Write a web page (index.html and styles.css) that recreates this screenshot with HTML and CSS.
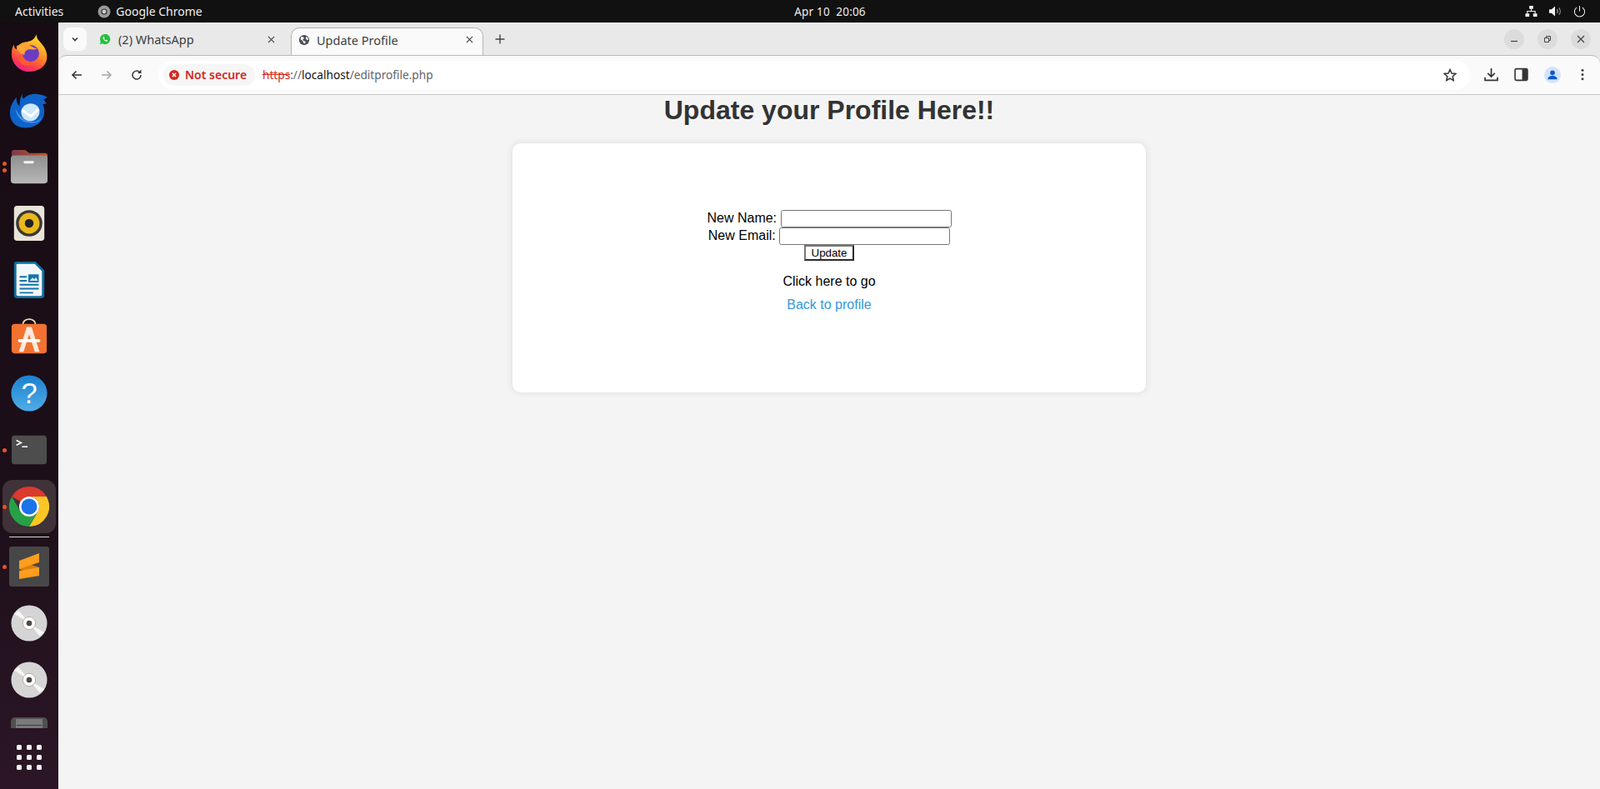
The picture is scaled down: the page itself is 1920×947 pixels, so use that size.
FILE: index.html
```html
<!DOCTYPE html>
<html lang="en">
<head>
<meta charset="utf-8">
<title>Update Profile</title>
<link rel="stylesheet" href="styles.css">
</head>
<body>
<header class="topbar">
  <div class="top-left">
    <span class="activities">Activities</span>
    <span class="app-name">
      <svg class="app-icon" viewBox="0 0 16 16"><circle cx="8" cy="8" r="7.5" fill="#9a9a9a"/><circle cx="8" cy="8" r="3.6" fill="#333"/><circle cx="8" cy="8" r="2.4" fill="#ccc"/></svg>
      Google Chrome
    </span>
  </div>
  <div class="clock">Apr 10&nbsp; 20:06</div>
  <div class="top-right">
    <svg class="tray" viewBox="0 0 16 16"><path d="M5.5 1h5v4h-5zM0.5 11h5v4h-5zM10.500 11h5v4h-5z" fill="#f2f2f2"/><path d="M8 5v3M3 11V8h10v3" fill="none" stroke="#f2f2f2" stroke-width="1.2"/></svg>
    <svg class="tray" viewBox="0 0 16 16"><path d="M0 5.500h3L7.500 1.500v13L3 10.500H0z" fill="#f2f2f2"/><path d="M10 5.500a4 4 0 0 1 0 5M12.500 3.500a7 7 0 0 1 0 9" fill="none" stroke="#9c9c9c" stroke-width="1.200"/></svg>
    <svg class="tray" viewBox="0 0 16 16"><path d="M8 1v7" stroke="#f2f2f2" stroke-width="1.100" fill="none"/><path d="M4.500 3a6.500 6.500 0 1 0 7 0" stroke="#f2f2f2" stroke-width="1.100" fill="none"/></svg>
  </div>
</header>

<div class="desktop">
  <nav class="dock">
    <div class="dock-item">
      <svg class="dock-icon" viewBox="0 0 48 48"><defs><linearGradient id="ff" x1="0.75" y1="0" x2="0.3" y2="1"><stop offset="0" stop-color="#ffe02e"/><stop offset="0.3" stop-color="#ffb02b"/><stop offset="0.55" stop-color="#ff7a2b"/><stop offset="0.8" stop-color="#fb3c4f"/><stop offset="1" stop-color="#ea1f8e"/></linearGradient></defs><path d="M33 0c0 7 5 9 9 15 4 6 5 11 4 17-2 9-11 15-22 15C12 47 2 37 2 25c0-5 1-9 3-12 0 3 1 5 3 6 2-5 5-8 11-9 7-1 12-3 14-10z" fill="url(#ff)"/><circle cx="26" cy="24" r="10.500" fill="#6a3cc4"/><path d="M8 15c6-3 12-3 17-1 4 2 6 4 9 4-3 2-8 1-11 1-3 1-5 3-5 7-4-2-9-5-10-11z" fill="#ffa436"/><path d="M16 27c2 7 9 11 16 8-6 7-18 5-21-3 1-2 3-4 5-5z" fill="#ff5a2e"/></svg>
    </div>
    <div class="dock-item">
      <svg class="dock-icon" viewBox="0 0 48 48"><path d="M16 3c-1 4-1 5 1 7 5-6 16-9 30-2l-5 3 4 5-5 1c4 8 2 17-4 23-8 8-26 9-33 0C-3 31-1 18 8 8c0 5 1 9 4 11 0-6 1-12 4-16z" fill="#0f62c8"/><path d="M14 28c-1-6 5-12 12-12 6 0 11 4 11 10 0 7-6 12-12 12-6 0-10-4-11-10z" fill="#cfe6fb"/><path d="M15 24l11 8 10-9" fill="none" stroke="#fff" stroke-width="3"/><path d="M7 22c1 13 11 20 24 18 5-1 8-4 9-7-3 4-9 7-16 5-8-2-14-8-17-16z" fill="#3f93e8"/></svg>
    </div>
    <div class="dock-item has-pips">
      <span class="pips"><i class="pip"></i><i class="pip"></i></span>
      <svg class="dock-icon" viewBox="0 0 48 48"><defs><linearGradient id="fold" x1="0" y1="0" x2="1" y2="0"><stop offset="0" stop-color="#7c3a4a"/><stop offset="1" stop-color="#c4552f"/></linearGradient><linearGradient id="folb" x1="0" y1="0" x2="0" y2="1"><stop offset="0" stop-color="#8f8f8f"/><stop offset="1" stop-color="#b8b8b8"/></linearGradient></defs><path d="M2 6a3 3 0 0 1 3-3h14l5 4h20a3 3 0 0 1 3 3v10H2z" fill="url(#fold)"/><rect x="1" y="10" width="46" height="35" rx="4" fill="url(#folb)"/><rect x="17" y="17" width="13" height="3" rx="1.500" fill="#f2f2f2"/></svg>
    </div>
    <div class="dock-item">
      <svg class="dock-icon" viewBox="0 0 48 48"><rect x="5" y="2" width="38" height="44" rx="4" fill="#e8e4d9"/><circle cx="24" cy="24" r="16.500" fill="#3a3835"/><circle cx="24" cy="24" r="13" fill="#e9b81c"/><circle cx="24" cy="24" r="5.500" fill="#222"/></svg>
    </div>
    <div class="dock-item">
      <svg class="dock-icon" viewBox="0 0 48 48"><path d="M8 1h24l11 11v31a4 4 0 0 1-4 4H9a4 4 0 0 1-4-4V4a3 3 0 0 1 3-3z" fill="#0f6e9f"/><path d="M9 4h22l9 9v29a2 2 0 0 1-2 2H10a2 2 0 0 1-2-2V5a1 1 0 0 1 1-1z" fill="#f4f7f9"/><path d="M12 19h9v2h-9zM12 24h9v2h-9zM12 29h24v2H12zM12 34h24v2H12zM12 39h17v2H12z" fill="#1274a8"/><rect x="23" y="17" width="13" height="10" fill="#1274a8"/><path d="M24.500 25l3.500-4 2.500 2 2-2.500 2.500 4.500z" fill="#cfe6f3"/></svg>
    </div>
    <div class="dock-item">
      <svg class="dock-icon" viewBox="0 0 48 48"><path d="M16 9c0-9 16-9 16 0" fill="none" stroke="#f1d9b5" stroke-width="2"/><rect x="2" y="8" width="44" height="37" rx="4" fill="#f27232"/><path d="M21 12h6l10 31h-6l-7-22-7 22h-6z" fill="#fde8dc"/><rect x="10" y="27" width="28" height="4" rx="2" fill="#fff"/></svg>
    </div>
    <div class="dock-item">
      <svg class="dock-icon" viewBox="0 0 48 48"><defs><linearGradient id="hp" x1="0" y1="0" x2="0" y2="1"><stop offset="0" stop-color="#1d80cf"/><stop offset="1" stop-color="#4fade8"/></linearGradient></defs><circle cx="24" cy="24" r="22.500" fill="url(#hp)"/><text class="help-mark" x="24" y="36" text-anchor="middle">?</text></svg>
    </div>
    <div class="dock-item has-pips">
      <span class="pips"><i class="pip"></i></span>
      <svg class="dock-icon" viewBox="0 0 48 48"><rect x="2" y="6" width="44" height="36" rx="4" fill="#4d4d4d"/><path d="M8 12l6 3-6 3" fill="none" stroke="#fff" stroke-width="1.600"/><path d="M15 20h7" stroke="#fff" stroke-width="1.600"/></svg>
    </div>
    <div class="dock-item has-pips">
      <span class="pips"><i class="pip"></i></span>
      <div class="dock-active">
        <svg class="chrome-icon" viewBox="0 0 48 48"><path d="M24 0A24 24 0 0 1 44.800 12H24A12 12 0 0 0 13.600 18L3.200 12A24 24 0 0 1 24 0Z" fill="#db3a2d"/><path d="M44.800 12A24 24 0 0 1 24 48L34.400 30A12 12 0 0 0 24 12Z" fill="#fcc624"/><path d="M3.200 12A24 24 0 0 0 24 48L34.400 30A12 12 0 0 1 13.600 30Z" fill="#26a146"/><circle cx="24" cy="24" r="12" fill="#fff"/><circle cx="24" cy="24" r="9.500" fill="#1a73e8"/></svg>
      </div>
    </div>
    <hr class="dock-sep">
    <div class="dock-item has-pips">
      <span class="pips"><i class="pip"></i></span>
      <svg class="sublime-icon" viewBox="0 0 48 48"><rect width="48" height="48" rx="3" fill="#474747"/><path d="M12 17l24 8v10L12 27z" fill="#d97e10"/><path d="M36 8v11l-24 8V17z" fill="#ff9d1c"/><path d="M36 25v10l-24 4V29z" fill="#ff9d1c"/></svg>
    </div>
    <div class="dock-item">
      <svg class="dock-icon" viewBox="0 0 48 48"><circle cx="24" cy="24" r="22.500" fill="#d5d5d5"/><path d="M5 12L24 24 11 8zM43 36L24 24 37 40z" fill="#f6f6f6"/><circle cx="24" cy="24" r="8" fill="#fff" stroke="#b5ab98"/><circle cx="24" cy="24" r="3.500" fill="#4a4a4a"/></svg>
    </div>
    <div class="dock-item">
      <svg class="dock-icon" viewBox="0 0 48 48"><circle cx="24" cy="24" r="22.500" fill="#d5d5d5"/><path d="M5 12L24 24 11 8zM43 36L24 24 37 40z" fill="#f6f6f6"/><circle cx="24" cy="24" r="8" fill="#fff" stroke="#b5ab98"/><circle cx="24" cy="24" r="3.500" fill="#4a4a4a"/></svg>
    </div>
    <div class="dock-drive">
      <svg class="drive-icon" viewBox="0 0 48 14"><path d="M2 14V6a5 5 0 0 1 5-5h34a5 5 0 0 1 5 5v8z" fill="#505050"/><rect x="8" y="3" width="32" height="11" fill="#7a7a7a"/><rect x="9" y="10" width="30" height="1" fill="#2c3d50"/></svg>
    </div>
    <div class="dock-grid">
      <i class="dot"></i><i class="dot"></i><i class="dot"></i>
      <i class="dot"></i><i class="dot"></i><i class="dot"></i>
      <i class="dot"></i><i class="dot"></i><i class="dot"></i>
    </div>
  </nav>

  <div class="browser">
    <div class="tabstrip">
      <button class="tab-search" type="button">
        <svg class="icon-12" viewBox="0 0 12 12"><path d="M3 4.500l3 3 3-3" fill="none" stroke="#333" stroke-width="1.600"/></svg>
      </button>
      <div class="tab tab-idle">
        <svg class="favicon" viewBox="0 0 16 16"><path d="M8 1a7 7 0 0 0-6 10.500L1 15l3.600-1A7 7 0 1 0 8 1z" fill="#25c13f"/><path d="M5.500 4.500c-1.200 1.500 0 3.500 1.500 5s3 2.200 4 1.500l.6-1.200-1.800-1-.8.700c-1-.4-1.700-1.200-2.200-2.200l.7-.8-.9-1.900z" fill="#fff"/></svg>
        <span class="tab-title">(2) WhatsApp</span>
        <svg class="tab-close" viewBox="0 0 10 10"><path d="M1 1l8 8M9 1l-8 8" stroke="#444" stroke-width="1.300"/></svg>
      </div>
      <div class="tab tab-active">
        <svg class="favicon" viewBox="0 0 16 16"><circle cx="8" cy="8" r="7" fill="#4a4f55"/><path d="M4 3l3 1 1 2-2 1 1 2 3 1-1 3-2-1-1-3-3-2zM11 3l2 2 1 3-2 0-2-2z" fill="#f9f9f9"/></svg>
        <span class="tab-title">Update Profile</span>
        <svg class="tab-close" viewBox="0 0 10 10"><path d="M1 1l8 8M9 1l-8 8" stroke="#444" stroke-width="1.300"/></svg>
      </div>
      <svg class="tab-new" viewBox="0 0 12 12"><path d="M6 .5v11M.5 6h11" stroke="#444" stroke-width="1.400"/></svg>
      <div class="window-controls">
        <span class="win-btn"><svg class="icon-12" viewBox="0 0 12 12"><path d="M2 8.500h8" stroke="#444" stroke-width="1.200"/></svg></span>
        <span class="win-btn"><svg class="icon-12" viewBox="0 0 12 12"><path d="M2.500 4.500h5v5h-5z M4.500 4.500v-2h5v5h-2" fill="none" stroke="#444"/></svg></span>
        <span class="win-btn"><svg class="icon-12" viewBox="0 0 12 12"><path d="M2 2l8 8M10 2l-8 8" stroke="#444" stroke-width="1.300"/></svg></span>
      </div>
    </div>

    <div class="toolbar">
      <div class="nav-buttons">
        <svg class="nav-icon" viewBox="0 0 16 16"><path d="M14 8H3M7.500 3.500L3 8l4.500 4.500" fill="none" stroke="#333" stroke-width="1.500"/></svg>
        <svg class="nav-icon" viewBox="0 0 16 16"><path d="M2 8h11M8.500 3.500L13 8l-4.500 4.500" fill="none" stroke="#a5a5a5" stroke-width="1.500"/></svg>
        <svg class="nav-icon" viewBox="0 0 16 16"><path d="M13 8a5 5 0 1 1-1.500-3.500" fill="none" stroke="#333" stroke-width="1.500"/><path d="M13.500 1.500v4.500H9z" fill="#333"/></svg>
      </div>
      <div class="omnibox">
        <div class="chip">
          <svg class="chip-icon" viewBox="0 0 12 12"><circle cx="6" cy="6" r="6" fill="#d3281e"/><path d="M3.800 3.800l4.400 4.400M8.200 3.800l-4.400 4.400" stroke="#fff" stroke-width="1.400"/></svg>
          <span class="chip-text">Not secure</span>
        </div>
        <div class="url"><s class="url-scheme">https</s><span class="url-sep">://</span><span class="url-host">localhost</span><span class="url-path">/editprofile.php</span></div>
        <svg class="star" viewBox="0 0 16 16"><path d="M8 1.500l2 4.500 4.800.5-3.600 3.200 1 4.800L8 12.100l-4.200 2.400 1-4.800L1.200 6.500 6 6z" fill="none" stroke="#333" stroke-width="1.500"/></svg>
      </div>
      <div class="tools">
        <svg class="tool" viewBox="0 0 16 16"><path d="M8 1v9M4 6.500L8 10.500l4-4M1 11v3.500h14V11" fill="none" stroke="#333" stroke-width="1.600"/></svg>
        <svg class="tool" viewBox="0 0 16 16"><rect x="1" y="1.500" width="14" height="13" rx="1.500" fill="none" stroke="#333" stroke-width="1.500"/><rect x="9" y="2" width="6" height="12" fill="#333"/></svg>
        <span class="avatar"><svg class="avatar-icon" viewBox="0 0 16 16"><circle cx="8" cy="5" r="3.200" fill="#0b57d0"/><path d="M1.500 14c0-3.500 3-5 6.500-5s6.500 1.500 6.500 5z" fill="#0b57d0"/></svg></span>
        <svg class="tool-dots" viewBox="0 0 4 16"><circle cx="2" cy="2.500" r="1.600" fill="#444"/><circle cx="2" cy="8" r="1.600" fill="#444"/><circle cx="2" cy="13.500" r="1.600" fill="#444"/></svg>
      </div>
    </div>

    <main class="page">
      <h1 class="page-title">Update your Profile Here!!</h1>
      <section class="card">
        <form class="profile-form">
          <label class="field">New Name: <input class="text-input" type="text"></label><br>
          <label class="field">New Email: <input class="text-input" type="text"></label><br>
          <input class="submit" type="button" value="Update">
        </form>
        <p class="note">Click here to go</p>
        <p class="note"><a class="back-link" href="#">Back to profile</a></p>
      </section>
    </main>
  </div>
</div>
</body>
</html>
```
FILE: styles.css
```css
* { box-sizing: border-box; }
html, body { margin: 0; height: 100%; overflow: hidden; }
body { width: 1920px; height: 947px; display: flex; flex-direction: column; font-family: "Liberation Sans", Arial, sans-serif; background: #111; }

.topbar { height: 27px; flex: none; background: #111; color: #eee; display: grid; grid-template-columns: 1fr auto 1fr; align-items: center; font-family: "Noto Sans", sans-serif; font-size: 14px; }
.top-left { display: flex; align-items: center; padding-left: 18px; gap: 37px; }
.app-name { display: flex; align-items: center; gap: 6px; margin-left: 4px; }
.app-icon { width: 16px; height: 16px; }
.clock { font-size: 13.500px; letter-spacing: .2px; margin-left: 72px; }
.top-right { display: flex; justify-content: flex-end; align-items: center; gap: 14px; padding-right: 17px; }
.tray { width: 15px; height: 15px; }

.desktop { flex: 1; display: flex; min-height: 0; }

.dock { width: 70px; flex: none; display: flex; flex-direction: column; align-items: center; padding-top: 3px; background: linear-gradient(170deg, #170b14 0%, #1c0f19 60%, #2c1626 100%); }
.dock-item { position: relative; width: 70px; height: 68px; flex: none; display: flex; align-items: center; justify-content: center; }
.dock-icon { width: 46px; height: 46px; }
.pips { position: absolute; left: 3px; top: 0; bottom: 0; display: flex; flex-direction: column; justify-content: center; gap: 3px; }
.pip { width: 5px; height: 5px; border-radius: 50%; background: #e95420; }
.dock-active { width: 64px; height: 64px; border-radius: 12px; background: #3f3238; display: flex; align-items: center; justify-content: center; }
.chrome-icon { width: 48px; height: 48px; }
.dock-sep { width: 48px; height: 1px; margin: 2px 0 1px; border: 0; background: #d8d4d6; flex: none; }
.sublime-icon { width: 48px; height: 48px; }
.help-mark { font-family: "Liberation Sans", sans-serif; font-size: 36px; fill: #fff; }
.dock-drive { height: 14px; margin-top: 10px; flex: none; }
.drive-icon { width: 48px; height: 14px; display: block; }
.dock-grid { margin-top: 20px; display: grid; grid-template-columns: repeat(3, 6px); gap: 6px; }
.dot { width: 6px; height: 6px; border-radius: 1.500px; background: #f4f4f4; }

.browser { flex: 1; min-width: 0; display: flex; flex-direction: column; background: #e9e9e9; }

.tabstrip { height: 39px; flex: none; display: flex; align-items: flex-end; padding-left: 6px; }
.tab-search { width: 28px; height: 28px; margin: 0 0 5px; padding: 0; border: 0; border-radius: 8px; background: #fafafa; display: flex; align-items: center; justify-content: center; }
.icon-12 { width: 12px; height: 12px; }
.tab { height: 33px; display: flex; align-items: center; padding: 0 10px 5px 15px; gap: 9px; border-radius: 10px 10px 0 0; color: #3c4043; font-family: "Noto Sans", sans-serif; font-size: 14.500px; }
.tab-idle { width: 240px; }
.tab-active { width: 231px; gap: 8px; background: #fafafa; border: 1px solid #b4b4b4; border-bottom: 0; margin-left: 5px; padding-left: 8px; }
.favicon { width: 14px; height: 14px; flex: none; }
.tab-title { flex: 1; white-space: nowrap; }
.tab-close { width: 9px; height: 9px; flex: none; margin-right: 4px; }
.tab-active .tab-close { margin-right: 1px; }
.tab-new { width: 12px; height: 12px; margin: 0 0 13px 14px; }
.window-controls { margin-left: auto; display: flex; gap: 16px; padding: 0 11px 7px 0; }
.win-btn { width: 24px; height: 24px; border-radius: 50%; background: #dcdcdc; display: flex; align-items: center; justify-content: center; }

.toolbar { height: 48px; flex: none; display: flex; align-items: center; background: #fafafa; border-top: 1px solid #b9b9b9; border-bottom: 1px solid #c8c8c8; border-radius: 10px 10px 0 0; padding: 0 0 1px 14px; }
.nav-buttons { display: flex; gap: 20px; width: 106px; flex: none; }
.nav-icon { width: 16px; height: 16px; }
.omnibox { width: 1574px; flex: none; height: 34px; background: #fff; border-radius: 17px; display: flex; align-items: center; padding: 0 16px 0 6px; }
.chip { width: 110px; height: 26px; border-radius: 13px; background: #f6f6f6; display: flex; align-items: center; gap: 7px; padding-left: 7px; flex: none; }
.chip-icon { width: 12px; height: 12px; }
.chip-text { color: #d3281e; font-family: "Noto Sans", sans-serif; font-size: 14px; font-weight: 600; white-space: nowrap; }
.url { margin-left: 9px; font-family: "Noto Sans", sans-serif; font-size: 13.650px; white-space: nowrap; }
.url-scheme { color: #d3281e; }
.url-sep, .url-path { color: #5f6368; }
.url-host { color: #111; }
.star { width: 16px; height: 16px; margin-left: auto; }
.tools { display: flex; align-items: center; flex: 1; padding-left: 17px; gap: 0; }
.tool { width: 17px; height: 17px; margin-right: 19px; }
.avatar { width: 20px; height: 20px; border-radius: 50%; background: #d3e3fd; display: flex; align-items: center; justify-content: center; margin-right: 24px; }
.avatar-icon { width: 14px; height: 14px; }
.tool-dots { width: 4px; height: 15px; }

.page { flex: 1; min-height: 0; background: #f4f4f4; display: flex; flex-direction: column; align-items: center; }
.page-title { margin: 0 0 21.440px; font-size: 32px; color: #333; text-align: center; }
.card { width: 760px; height: 299px; padding: 80px 0; background: #fff; border-radius: 10px; box-shadow: 0 0 10px rgba(0, 0, 0, .1); text-align: center; }
.profile-form { margin: 0 0 16px; font-size: 16px; color: #000; }
.note { margin: 10px 0; font-size: 16px; color: #000; }
.back-link { color: #3498db; text-decoration: none; }
.text-input { width: 205px; height: 21px; margin: 0; padding: 1px 2px; font-size: 13.333px; border: 1px solid #767676; border-radius: 2.500px; background: #fff; }
.submit { width: 60px; height: 19px; margin: 0; padding: 0; font-size: 13.333px; font-family: "Liberation Sans", sans-serif; color: #000; background: #fff; border: 2px solid; border-color: #767676 #2b2b2b #2b2b2b #767676; }
```
